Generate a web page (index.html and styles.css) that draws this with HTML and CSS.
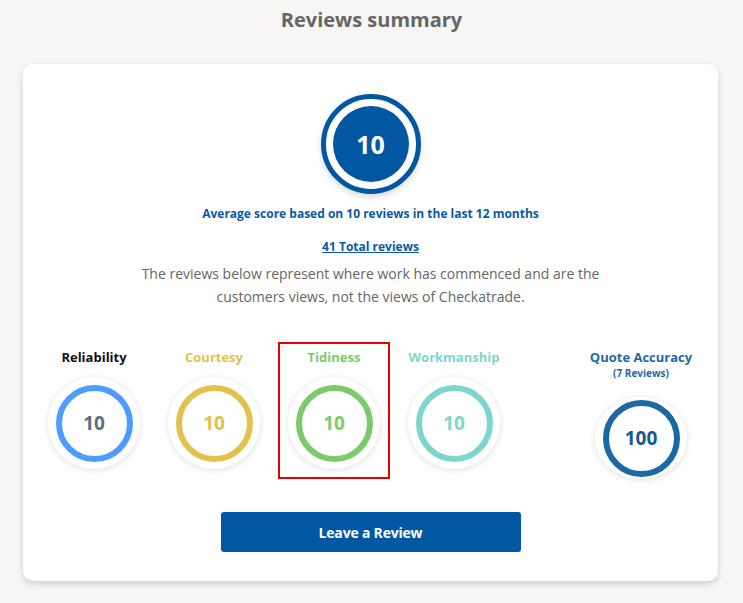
FILE: index.html
```html
<!DOCTYPE html>
<html lang="en">
<head>
<meta charset="utf-8">
<title>Reviews summary</title>
<link rel="stylesheet" href="styles.css">
</head>
<body>
<h1 class="title">Reviews summary</h1>
<section class="card">
  <div class="score">
    <div class="score-inner">10</div>
  </div>
  <p class="avg">Average score based on 10 reviews in the last 12 months</p>
  <a class="total" href="#">41 Total reviews</a>
  <p class="note">The reviews below represent where work has commenced and are the customers views, not the views of Checkatrade.</p>
  <div class="ratings">
    <div class="rating r-rel">
      <div class="label">Reliability</div>
      <div class="disc"><div class="ring">10</div></div>
    </div>
    <div class="rating r-cour">
      <div class="label">Courtesy</div>
      <div class="disc"><div class="ring">10</div></div>
    </div>
    <div class="rating r-tidy highlighted">
      <div class="label">Tidiness</div>
      <div class="disc"><div class="ring">10</div></div>
    </div>
    <div class="rating r-work">
      <div class="label">Workmanship</div>
      <div class="disc"><div class="ring">10</div></div>
    </div>
    <div class="rating r-quote">
      <div class="label">Quote Accuracy</div>
      <div class="sub">(7 Reviews)</div>
      <div class="disc"><div class="ring">100</div></div>
    </div>
  </div>
  <button class="btn" type="button">Leave a Review</button>
</section>
</body>
</html>
```
FILE: styles.css
```css
html, body {
  margin: 0;
  padding: 0;
}
body {
  background: #f7f6f4;
  font-family: "Open Sans", "Liberation Sans", sans-serif;
  width: 743px;
  height: 603px;
  overflow: hidden;
}
.title {
  margin: 0;
  padding-top: 6px;
  text-align: center;
  font-size: 20px;
  line-height: 28px;
  font-weight: 700;
  color: #666666;
}
.card {
  margin: 30px 25px 0 23px;
  background: #ffffff;
  border-radius: 10px;
  box-shadow: 0 3px 6px rgba(0, 0, 0, 0.16);
  padding: 30px 0 29px;
  display: flex;
  flex-direction: column;
  align-items: center;
}
.score {
  width: 100px;
  height: 100px;
  box-sizing: border-box;
  border-radius: 50%;
  border: 5px solid #0257a3;
  background: #ffffff;
  display: flex;
  align-items: center;
  justify-content: center;
  box-shadow: 0 3px 6px rgba(0, 0, 0, 0.15);
}
.score-inner {
  width: 76px;
  height: 76px;
  border-radius: 50%;
  background: #0257a3;
  color: #ffffff;
  font-size: 25px;
  font-weight: 700;
  display: flex;
  align-items: center;
  justify-content: center;
}
.avg {
  margin: 11px 0 0;
  font-size: 12px;
  line-height: 17px;
  font-weight: 700;
  color: #0a5aa3;
}
.total {
  margin-top: 16px;
  font-size: 12px;
  line-height: 17px;
  font-weight: 700;
  color: #0a5aa3;
  text-decoration: underline;
}
.note {
  margin: 7px 0 0;
  width: 480px;
  text-align: center;
  font-size: 14px;
  line-height: 23px;
  color: #666666;
}
.ratings {
  align-self: stretch;
  display: flex;
  margin-top: 34px;
  padding: 0 17px 0 11px;
}
.rating {
  width: 120px;
  box-sizing: border-box;
  padding-top: 6px;
  height: 137px;
  display: flex;
  flex-direction: column;
  align-items: center;
  position: relative;
}
.r-quote {
  margin-left: auto;
}
.highlighted::after {
  content: "";
  position: absolute;
  left: 4px;
  right: 4px;
  top: 0;
  bottom: 0;
  border: 2px solid #e60000;
}
.label {
  font-size: 13px;
  line-height: 18px;
  font-weight: 700;
}
.sub {
  font-size: 10px;
  line-height: 14px;
  font-weight: 700;
  color: #1d69a3;
}
.disc {
  margin-top: 11px;
  width: 92px;
  height: 92px;
  border-radius: 50%;
  background: #ffffff;
  box-shadow: 0 1px 6px rgba(0, 0, 0, 0.13);
  display: flex;
  align-items: center;
  justify-content: center;
}
.r-quote .disc {
  margin-top: 17px;
}
.ring {
  width: 77px;
  height: 77px;
  box-sizing: border-box;
  border-radius: 50%;
  border: 6px solid;
  display: flex;
  align-items: center;
  justify-content: center;
  font-size: 19px;
  font-weight: 700;
}
.r-rel .label { color: #111111; }
.r-rel .ring { border-color: #4d9dff; color: #5e6d86; }
.r-cour .label { color: #e2c24a; }
.r-cour .ring { border-color: #e2c24a; color: #e2c24a; }
.r-tidy .label { color: #7ccb6b; }
.r-tidy .ring { border-color: #7ccb6b; color: #7ccb6b; }
.r-work .label { color: #7dd6cb; }
.r-work .ring { border-color: #7dd6cb; color: #7dd6cb; }
.r-quote .label { color: #1d69a3; }
.r-quote .ring { border-color: #1a69a2; color: #145a8f; }
.btn {
  margin-top: 33px;
  width: 300px;
  height: 40px;
  border: 0;
  border-radius: 3px;
  background: #0257a3;
  color: #ffffff;
  font-family: "Open Sans", "Liberation Sans", sans-serif;
  font-size: 14px;
  font-weight: 700;
  letter-spacing: -0.2px;
}
```
